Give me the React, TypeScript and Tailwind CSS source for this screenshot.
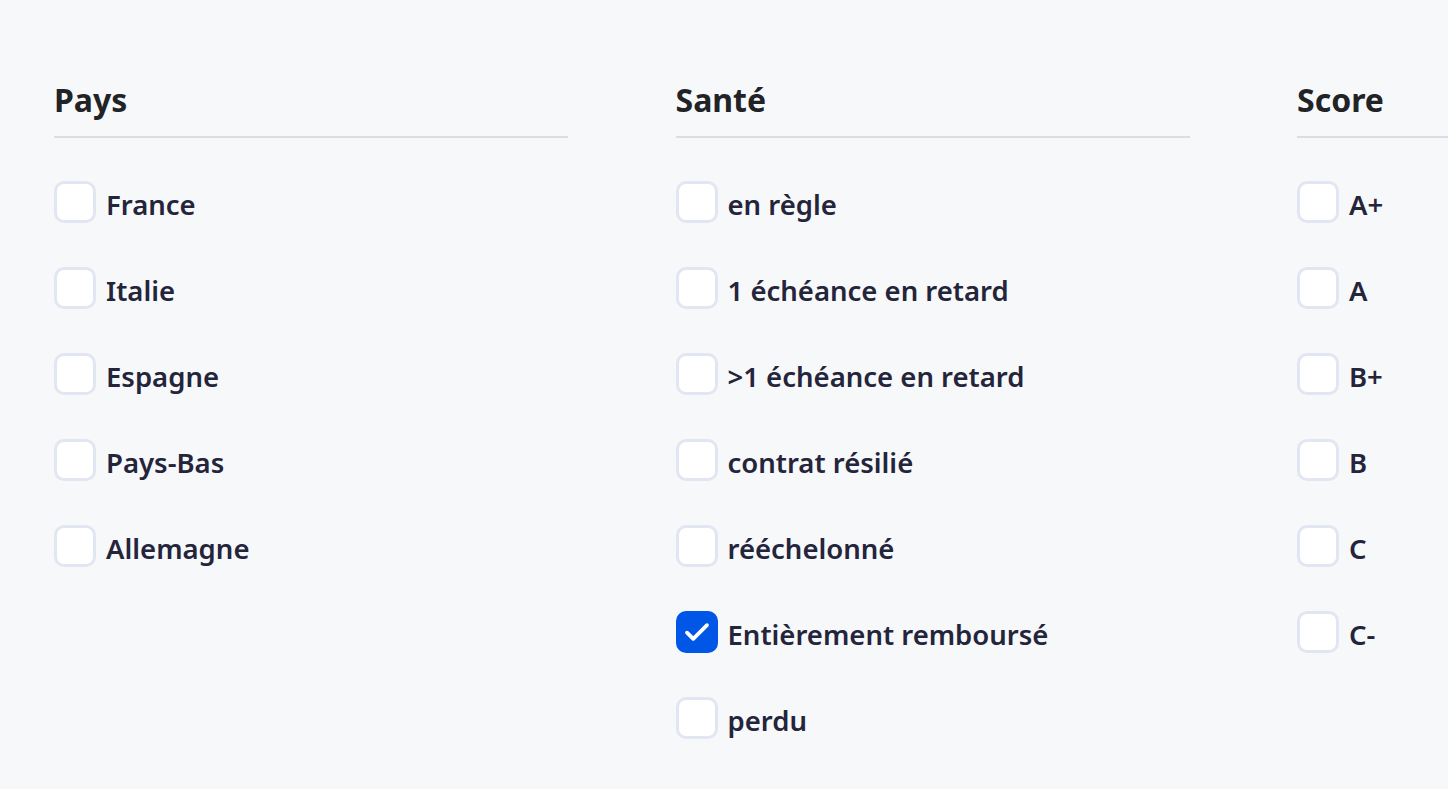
import { useState } from "react";

type Groupe = {
  titre: string;
  options: string[];
};

const groupes: Groupe[] = [
  {
    titre: "Pays",
    options: ["France", "Italie", "Espagne", "Pays-Bas", "Allemagne"],
  },
  {
    titre: "Santé",
    options: [
      "en règle",
      "1 échéance en retard",
      ">1 échéance en retard",
      "contrat résilié",
      "rééchelonné",
      "Entièrement remboursé",
      "perdu",
    ],
  },
  {
    titre: "Score",
    options: ["A+", "A", "B+", "B", "C", "C-"],
  },
];

function Case({
  label,
  coche,
  onToggle,
}: {
  label: string;
  coche: boolean;
  onToggle: () => void;
}) {
  return (
    <label className="flex items-center gap-[10px] cursor-pointer h-[42px]">
      <button
        type="button"
        onClick={onToggle}
        className={
          coche
            ? "w-[42px] h-[42px] shrink-0 rounded-[10px] bg-[#0057e7] flex items-center justify-center"
            : "w-[42px] h-[42px] shrink-0 rounded-[10px] bg-white border-[3px] border-[#e1e6f2]"
        }
      >
        {coche && (
          <svg width="30" height="30" viewBox="0 0 24 24" fill="none">
            <path
              d="M4 12.5l5 5L20 6.5"
              stroke="white"
              strokeWidth="3"
              strokeLinecap="round"
              strokeLinejoin="round"
            />
          </svg>
        )}
      </button>
      <span className="text-[27.5px] leading-[42px] pt-[5px] font-semibold text-[#24253a] whitespace-nowrap">
        {label}
      </span>
    </label>
  );
}

export default function App() {
  const [coches, setCoches] = useState<Record<string, boolean>>({
    "Santé:Entièrement remboursé": true,
  });

  const toggle = (cle: string) =>
    setCoches((c) => ({ ...c, [cle]: !c[cle] }));

  return (
    <div
      className="min-h-[789px] w-full overflow-hidden bg-[#f7f8fa] pt-[77px] pl-[54px]"
      style={{ fontFamily: '"Noto Sans", "Open Sans", sans-serif' }}
    >
      <div className="flex gap-[107.5px]">
        {groupes.map((g) => (
          <div key={g.titre} className="w-[514px] shrink-0">
            <h2 className="text-[32px] font-bold text-[#222326] leading-[46px] pb-[13px] border-b-2 border-[#dcdde1]">
              {g.titre}
            </h2>
            <div className="flex flex-col gap-[44px] pt-[43px]">
              {g.options.map((o) => {
                const cle = `${g.titre}:${o}`;
                return (
                  <Case
                    key={o}
                    label={o}
                    coche={!!coches[cle]}
                    onToggle={() => toggle(cle)}
                  />
                );
              })}
            </div>
          </div>
        ))}
      </div>
    </div>
  );
}
